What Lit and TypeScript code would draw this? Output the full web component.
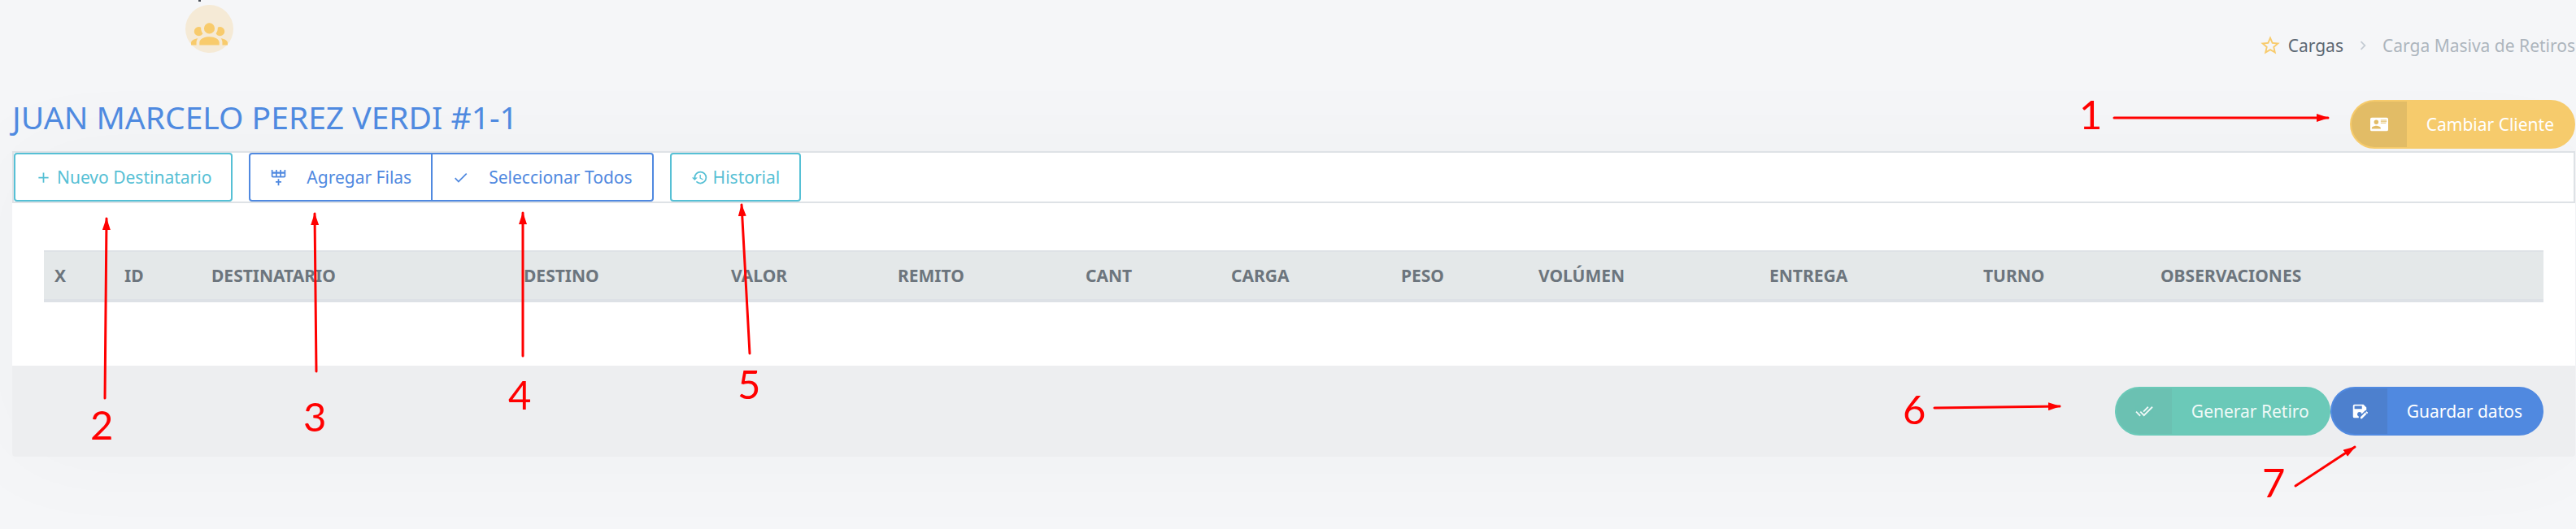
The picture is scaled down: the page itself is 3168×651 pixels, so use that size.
import { LitElement, html, css, svg } from "lit";
import { customElement, property } from "lit/decorators.js";

const icons: Record<string, unknown> = {
  group: svg`<path d="M12 5.5A3.5 3.5 0 0 1 15.5 9a3.5 3.5 0 0 1-3.5 3.5A3.5 3.5 0 0 1 8.5 9 3.5 3.5 0 0 1 12 5.5M5 8c.56 0 1.08.15 1.53.42-.15 1.43.27 2.85 1.13 3.96C7.16 13.34 6.16 14 5 14a3 3 0 0 1-3-3 3 3 0 0 1 3-3m14 0a3 3 0 0 1 3 3 3 3 0 0 1-3 3c-1.16 0-2.16-.66-2.66-1.62a5.54 5.54 0 0 0 1.13-3.96c.45-.27.97-.42 1.53-.42M5.500 18.250c0-2.070 2.910-3.750 6.500-3.750s6.500 1.680 6.500 3.750V20h-13v-1.750M0 20v-1.500c0-1.390 1.890-2.560 4.450-2.900-.59.680-.95 1.620-.95 2.650V20H0m24 0h-3.500v-1.750c0-1.030-.36-1.970-.95-2.650 2.560.34 4.450 1.510 4.450 2.900V20z"/>`,
  star: svg`<path d="m12 15.390-3.760 2.270.99-4.280-3.320-2.880 4.380-.37L12 6.090l1.710 4.040 4.380.37-3.320 2.880.99 4.280M22 9.240l-7.190-.61L12 2 9.190 8.630 2 9.240l5.450 4.730L5.820 21 12 17.270 18.180 21l-1.640-7.030L22 9.240z"/>`,
  chevron: svg`<path d="M8.590 16.580 13.170 12 8.590 7.410 10 6l6 6-6 6-1.410-1.420z"/>`,
  card: svg`<path fill-rule="evenodd" d="M2 3h20a2 2 0 0 1 2 2v14a2 2 0 0 1-2 2H2a2 2 0 0 1-2-2V5a2 2 0 0 1 2-2m12 3v1h8V6h-8m0 2v1h8V8h-8m0 2v1h7v-1h-7m-6 3.910C6 13.910 2 15 2 17v1h12v-1c0-2-4-3.090-6-3.090M8 6a3 3 0 0 0-3 3 3 3 0 0 0 3 3 3 3 0 0 0 3-3 3 3 0 0 0-3-3z"/>`,
  plus: svg`<path d="M19 13h-6v6h-2v-6H5v-2h6V5h2v6h6v2z"/>`,
  rows: svg`<path fill-rule="evenodd" d="M22 10a2 2 0 0 1-2 2H4a2 2 0 0 1-2-2V1h2v3h4V1h2v3h4V1h2v3h4V1h2v9M4 10h4V6.500H4V10m6 0h4V6.500h-4V10m10 0V6.500h-4V10h4m-9 4h2v3h3v2h-3v4h-2v-4H8v-2h3v-3z"/>`,
  check: svg`<path d="M21 7 9 19l-5.500-5.500 1.410-1.410L9 16.170 19.590 5.590 21 7z"/>`,
  history: svg`<path d="M13.500 8H12v5l4.280 2.540.72-1.210-3.500-2.080V8M13 3a9 9 0 0 0-9 9H1l3.960 4.030L9 12H6a7 7 0 0 1 7-7 7 7 0 0 1 7 7 7 7 0 0 1-7 7c-1.930 0-3.680-.79-4.940-2.060l-1.420 1.420A8.900 8.900 0 0 0 13 21a9 9 0 0 0 9-9 9 9 0 0 0-9-9"/>`,
  checks: svg`<path d="M.41 13.410 6 19l1.410-1.420L1.830 12m20.410-6.420L11.660 16.170 7.500 12l-1.430 1.410L11.660 19l12-12M18 7l-1.410-1.420-6.350 6.350 1.420 1.400L18 7z"/>`,
  save: svg`<path fill-rule="evenodd" d="M5 3h12l4 4v3.500a3 3 0 0 0-2 .9l-4.300 4.300a3 3 0 1 0-4 3.300V21H5a2 2 0 0 1-2-2V5a2 2 0 0 1 2-2m0 2v4h10V5H5m17.850 9.470-1 1-2-2 1-1c.18-.2.520-.2.720 0l1.280 1.280c.2.200.2.540 0 .72M13 19.940l6.200-6.210 2 2L15 22h-2v-2.060z"/>`,
};

@customElement("ui-icon")
class UiIcon extends LitElement {
  @property() name = "";
  static styles = css`
    :host { display: inline-flex; width: 22px; height: 22px; flex: none; }
    svg { width: 100%; height: 100%; fill: currentColor; }
  `;
  render() {
    return html`<svg viewBox="0 0 24 24" aria-hidden="true">${icons[this.name]}</svg>`;
  }
}

// Label and relative width of each column.
const columns = [
  ["X", 86], ["ID", 107], ["DESTINATARIO", 384], ["DESTINO", 255], ["VALOR", 205],
  ["REMITO", 231], ["CANT", 179], ["CARGA", 209], ["PESO", 169], ["VOLÚMEN", 284],
  ["ENTREGA", 263], ["TURNO", 218], ["OBSERVACIONES", 484],
] as const;
const total = columns.reduce((sum, [, w]) => sum + w, 0);

// Numbered callouts drawn over the page, each with its arrow.
const notes = [
  { n: "1", x: 2557, y: 159, from: [2600, 145], to: [2863, 145] },
  { n: "2", x: 111, y: 541, from: [129, 490], to: [131, 269] },
  { n: "3", x: 373, y: 531, from: [389, 457], to: [387, 263] },
  { n: "4", x: 625, y: 504, from: [643, 438], to: [643, 262] },
  { n: "5", x: 907, y: 491, from: [922, 435], to: [912, 252] },
  { n: "6", x: 2340, y: 522, from: [2379, 502], to: [2533, 500] },
  { n: "7", x: 2782, y: 612, from: [2823, 598], to: [2896, 550] },
];

@customElement("app-root")
class AppRoot extends LitElement {
  static styles = css`
    :host {
      display: block;
      position: relative;
      box-sizing: border-box;
      min-height: 100vh;
      padding-left: 15px;
      padding-right: 1px;
      overflow: hidden;
      background: #f5f6f8;
      color: #6c757d;
      font: 21px/32px "Noto Sans", "Open Sans", sans-serif;
    }
    * { box-sizing: border-box; }
    .top { display: flex; justify-content: space-between; height: 112px; padding-top: 6px; }
    .avatar {
      display: flex; align-items: center; justify-content: center;
      width: 59px; height: 59px; margin-left: 213px; padding-top: 10px;
      border-radius: 50%; background: #f5ead6; color: #f8cb6c;
    }
    .avatar ui-icon { width: 45px; height: 45px; }
    .pin { position: absolute; top: 0; left: 244px; width: 3px; height: 2px; background: #4a4f58; }
    .crumbs { display: flex; align-items: center; height: 32px; margin-top: 34px; }
    .crumbs a { display: flex; align-items: center; gap: 8px; color: #5c6873; text-decoration: none; }
    .crumbs .star { width: 28px; height: 28px; color: #f8cb6c; }
    .crumbs .sep { margin: 0 13px; color: #c5ccd4; }
    .crumbs .here { color: #adb5bd; }
    .card { border-radius: 4px; box-shadow: 0 0 130px rgba(0, 0, 0, 0.03); }
    .head { display: flex; justify-content: space-between; align-items: flex-start; height: 74px; }
    .head .pill { margin-top: 11px; }
    h1 { margin: 0; font-size: 39px; line-height: 64px; font-weight: 400; color: #4f8ae0; }
    button { font: inherit; cursor: pointer; margin: 0; }
    .pill {
      display: inline-flex; align-items: stretch; height: 60px; padding: 0;
      border: 2px solid; border-radius: 30px; overflow: hidden; color: #fff;
    }
    .pill .ico { display: flex; align-items: center; justify-content: center; width: 68px; }
    .pill .txt { display: flex; align-items: center; padding: 0 24px; }
    .warn { background: #f6cb6c; border-color: #f6cb6c; }
    .warn .ico { background: #e2bc66; }
    .ok { background: #6bc9b8; border-color: #6bc9b8; }
    .ok .ico { background: #6bc1b2; }
    .ok .txt, .ok ui-icon { opacity: 0.9; }
    .prim { background: #5089e0; border-color: #5089e0; }
    .prim .ico { background: #4d80ce; }
    .tools { display: flex; gap: 20px; border: 2px solid #dee2e6; background: #fff; }
    .btn {
      display: inline-flex; align-items: center; gap: 6px; height: 60px; padding: 0 24px;
      border: 2px solid; border-radius: 4px; background: #fff;
    }
    .btn ui-icon { width: 21px; height: 21px; }
    .info { color: #56c0d5; }
    .blue { color: #5089e0; }
    .pair { display: flex; }
    .pair .btn { gap: 24px; }
    .pair .btn:first-child { border-radius: 4px 0 0 4px; }
    .pair .btn:last-child { border-radius: 0 4px 4px 0; margin-left: -2px; }
    .body { padding: 58px 39px 78px; background: #fff; }
    table { width: 100%; table-layout: fixed; border-collapse: separate; border-spacing: 0; }
    th {
      height: 64px; padding: 0 13px; text-align: left; font-weight: 700; white-space: nowrap;
      background: #e4e8e9; border-top: 2px solid #dee2e6; border-bottom: 4px solid #dde1e6;
    }
    .foot { display: flex; justify-content: flex-end; padding: 26px 39px; background: #edeef0; border-radius: 0 0 4px 4px; }
    .notes { position: absolute; top: 0; left: 0; width: 3168px; height: 651px; pointer-events: none; }
    .notes text { font: 49px Lato, sans-serif; fill: #f00; }
    .notes line { stroke: #f00; stroke-width: 3; stroke-linecap: round; }
  `;

  render() {
    return html`
      <span class="pin"></span>
      <div class="top">
        <div class="avatar"><ui-icon name="group"></ui-icon></div>
        <nav class="crumbs">
          <a href="#cargas"><ui-icon class="star" name="star"></ui-icon>Cargas</a>
          <ui-icon class="sep" name="chevron"></ui-icon>
          <span class="here">Carga Masiva de Retiros</span>
        </nav>
      </div>
      <header class="head">
        <h1>JUAN MARCELO PEREZ VERDI #1-1</h1>
        ${this.pill("warn", "card", "Cambiar Cliente")}
      </header>
      <section class="card">
        <div class="tools">
          <button class="btn info"><ui-icon name="plus"></ui-icon>Nuevo Destinatario</button>
          <div class="pair">
            <button class="btn blue"><ui-icon name="rows"></ui-icon>Agregar Filas</button>
            <button class="btn blue"><ui-icon name="check"></ui-icon>Seleccionar Todos</button>
          </div>
          <button class="btn info"><ui-icon name="history"></ui-icon>Historial</button>
        </div>
        <div class="body">
          <table>
            <colgroup>${columns.map(([, w]) => html`<col style="width:${(w / total) * 100}%">`)}</colgroup>
            <thead><tr>${columns.map(([label]) => html`<th scope="col">${label}</th>`)}</tr></thead>
          </table>
        </div>
        <footer class="foot">
          ${this.pill("ok", "checks", "Generar Retiro")}
          ${this.pill("prim", "save", "Guardar datos")}
        </footer>
      </section>
      <svg class="notes" viewBox="0 0 3168 651">
        <defs>
          <marker id="tip" markerUnits="userSpaceOnUse" markerWidth="15" markerHeight="10" refX="14" refY="5" orient="auto">
            <path d="M0 0 15 5 0 10z" fill="#f00"></path>
          </marker>
        </defs>
        ${notes.map((a) => svg`
          <line x1=${a.from[0]} y1=${a.from[1]} x2=${a.to[0]} y2=${a.to[1]} marker-end="url(#tip)"></line>
          <text x=${a.x} y=${a.y}>${a.n}</text>`)}
      </svg>
    `;
  }

  private pill(kind: string, icon: string, label: string) {
    return html`<button class="pill ${kind}"><span class="ico"><ui-icon name=${icon}></ui-icon></span><span class="txt">${label}</span></button>`;
  }
}
